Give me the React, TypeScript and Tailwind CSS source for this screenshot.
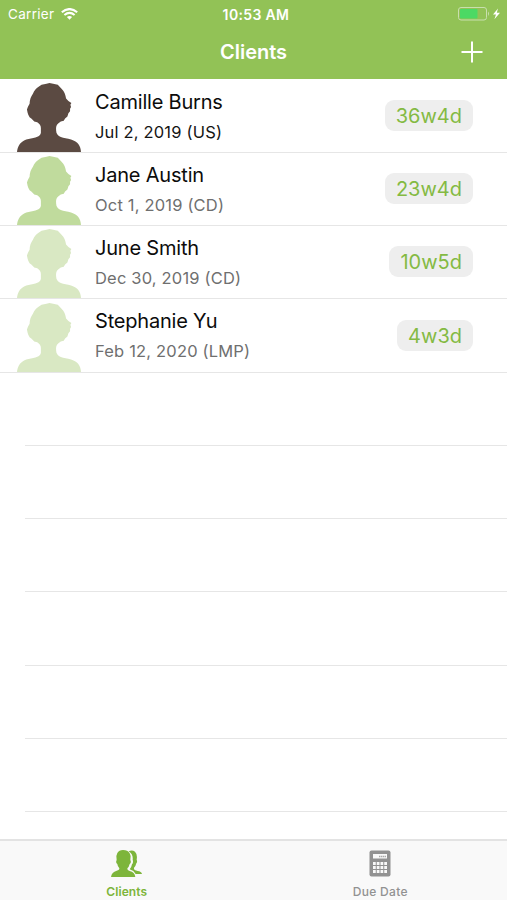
import clsx from "clsx";

interface Client {
  name: string;
  date: string;
  age: string;
  avatar: string;
  dateColor: string;
}

const clients: Client[] = [
  { name: "Camille Burns", date: "Jul 2, 2019 (US)", age: "36w4d", avatar: "text-[#5b4a42]", dateColor: "text-[#151515]" },
  { name: "Jane Austin", date: "Oct 1, 2019 (CD)", age: "23w4d", avatar: "text-[#c0db9d]", dateColor: "text-[#6f6f6f]" },
  { name: "June Smith", date: "Dec 30, 2019 (CD)", age: "10w5d", avatar: "text-[#d9e8c3]", dateColor: "text-[#6f6f6f]" },
  { name: "Stephanie Yu", date: "Feb 12, 2020 (LMP)", age: "4w3d", avatar: "text-[#d9e8c3]", dateColor: "text-[#6f6f6f]" },
];

function Avatar({ className }: { className: string }) {
  return (
    <svg className={clsx("h-[69px] w-16 shrink-0", className)} viewBox="8 15 193 206" preserveAspectRatio="none" fill="currentColor">
      <path d="M8 221C10 205 17 191 36 184C55 178 76 179 80 164V149C80 141 76 137 69 132L60 130L52 122L46 117L42 110L40 104L38 94L41 86L46 77C46 65 50 55 56 47C60 38 65 32 72 27L82 20L97 17L106 15L117 17L131 20L143 33C151 41 154 50 156 61L163 69L172 75L169 80L171 87L168 92L168 99L163 105L160 115L153 121L149 128L140 130L133 135C127 139 125 145 126 157C126 178 149 178 171 184C192 190 200 204 201 221Z" />
    </svg>
  );
}

function StatusBar() {
  return (
    <div className="grid h-7 grid-cols-[1fr_auto_1fr] items-center pr-[6px] pl-2 text-[13px]">
      <div className="flex items-center gap-[7px]">
        <span className="text-[13.5px] tracking-[0.3px]">Carrier</span>
        <svg className="h-3 w-[17px]" viewBox="0 0 17 12" fill="none" stroke="white" strokeWidth="2.1">
          <path d="M.8 4.3Q8.5-2.2 16.2 4.3M3.4 7Q8.5 2.9 13.6 7" />
          <path d="M5.9 8.9Q8.5 7 11.1 8.9L8.5 11.7Z" fill="white" stroke="none" />
        </svg>
      </div>
      <span className="ml-[3px] text-[14px] font-semibold tracking-[0.35px]">10:53 AM</span>
      <svg className="mt-[-1px] h-[15px] w-[44px] justify-self-end" viewBox="0 0 44 15" fill="none">
        <rect x="1.5" y="1.5" width="28" height="12.5" rx="2.5" stroke="#c8dfae" />
        <rect x="3" y="3" width="17.5" height="9.5" rx="1" fill="#4cd964" />
        <path d="M31 5.5Q33 7.5 31 10Z" fill="#c8dfae" />
        <path d="M41 2.5L36 8.5H39L37.4 13.2L43 6.8H39.8Z" fill="white" />
      </svg>
    </div>
  );
}

function Header() {
  return (
    <header className="h-[79px] shrink-0 bg-[#92c256] text-white">
      <StatusBar />
      <div className="grid h-12 grid-cols-[1fr_auto_1fr] items-center px-6">
        <h1 className="col-start-2 text-[20px] font-semibold">Clients</h1>
        <svg className="h-[22px] w-[22px] justify-self-end" viewBox="0 0 22 22" stroke="white" strokeWidth="2">
          <path d="M11 .5V21.5M.5 11H21.5" />
        </svg>
      </div>
    </header>
  );
}

function ClientRow({ client }: { client: Client }) {
  return (
    <li className="flex h-[73.25px] items-end border-b border-[#e6e6e6] pr-[34px] pl-[17px]">
      <Avatar className={client.avatar} />
      <div className="ml-[14px] grow self-stretch pt-2">
        <div className="text-[20px] leading-7 tracking-[-0.2px] text-[#0c0c0c]">{client.name}</div>
        <div className={clsx("mt-1 text-[16.5px] leading-6 tracking-[0.18px]", client.dateColor)}>{client.date}</div>
      </div>
      <span className="mb-[21px] h-[31px] rounded-[9px] bg-[#eeeeee] px-[11px] text-[20px] leading-[32px] text-[#84ba43]">
        {client.age}
      </span>
    </li>
  );
}

function TabBar() {
  return (
    <nav className="grid h-[61px] shrink-0 grid-cols-2 border-t-2 border-[#e3e3e3] bg-[#f9f9f9] text-[12px] font-medium">
      <a className="flex flex-col items-center pt-[9px] text-[#7db53b]">
        <svg className="h-[27px] w-[31px]" viewBox="12 15 93 81" preserveAspectRatio="none" fill="currentColor">
          <path d="M65 19Q75 13 84 20Q92 28 89 44Q92 51 88 55Q86 64 81 68V73Q83 77 92 78Q103 79 105 87H86Q81 77 68 73Q74 66 75 58Q80 53 77 44Q79 28 65 19Z" />
          <path d="M31 24Q36 15 48 15Q62 15 68 25Q73 32 70 45Q74 53 68 57Q66 66 61 70Q60 76 68 78Q83 81 85 96H12Q14 81 29 77Q38 75 37 70Q32 65 31 57Q25 53 29 45Q26 32 31 24Z" />
        </svg>
        <span className="mt-[7px] leading-4 font-semibold tracking-[0.1px]">Clients</span>
      </a>
      <a className="flex flex-col items-center pt-[9px] text-[#929292]">
        <svg className="h-[27px] w-[22px]" viewBox="0 0 22 27">
          <rect x=".5" y=".5" width="21" height="26" rx="2" fill="currentColor" />
          <path d="M4 4H18V8.5H4Z" fill="#f9f9f9" />
          <path d="M10 6.5H17" stroke="#aaaaaa" strokeWidth="1.5" strokeDasharray="1.5 .5" />
          <path d="M4 13.5H18M4 17.5H18M4 21.5H18" stroke="#f9f9f9" strokeWidth="3" strokeDasharray="2.75 1" />
        </svg>
        <span className="mt-[7px] leading-4 tracking-[0.3px]">Due Date</span>
      </a>
    </nav>
  );
}

export default function App() {
  return (
    <div className="flex h-[900px] w-[507px] flex-col overflow-hidden bg-white font-['Inter',sans-serif]">
      <Header />
      <ul className="min-h-0 grow overflow-hidden pt-[0.7px]">
        {clients.map((client) => (
          <ClientRow key={client.name} client={client} />
        ))}
        {Array.from({ length: 6 }, (_, i) => (
          <li key={i} className="ml-[25px] h-[73.25px] border-b border-[#e6e6e6]" />
        ))}
      </ul>
      <TabBar />
    </div>
  );
}
